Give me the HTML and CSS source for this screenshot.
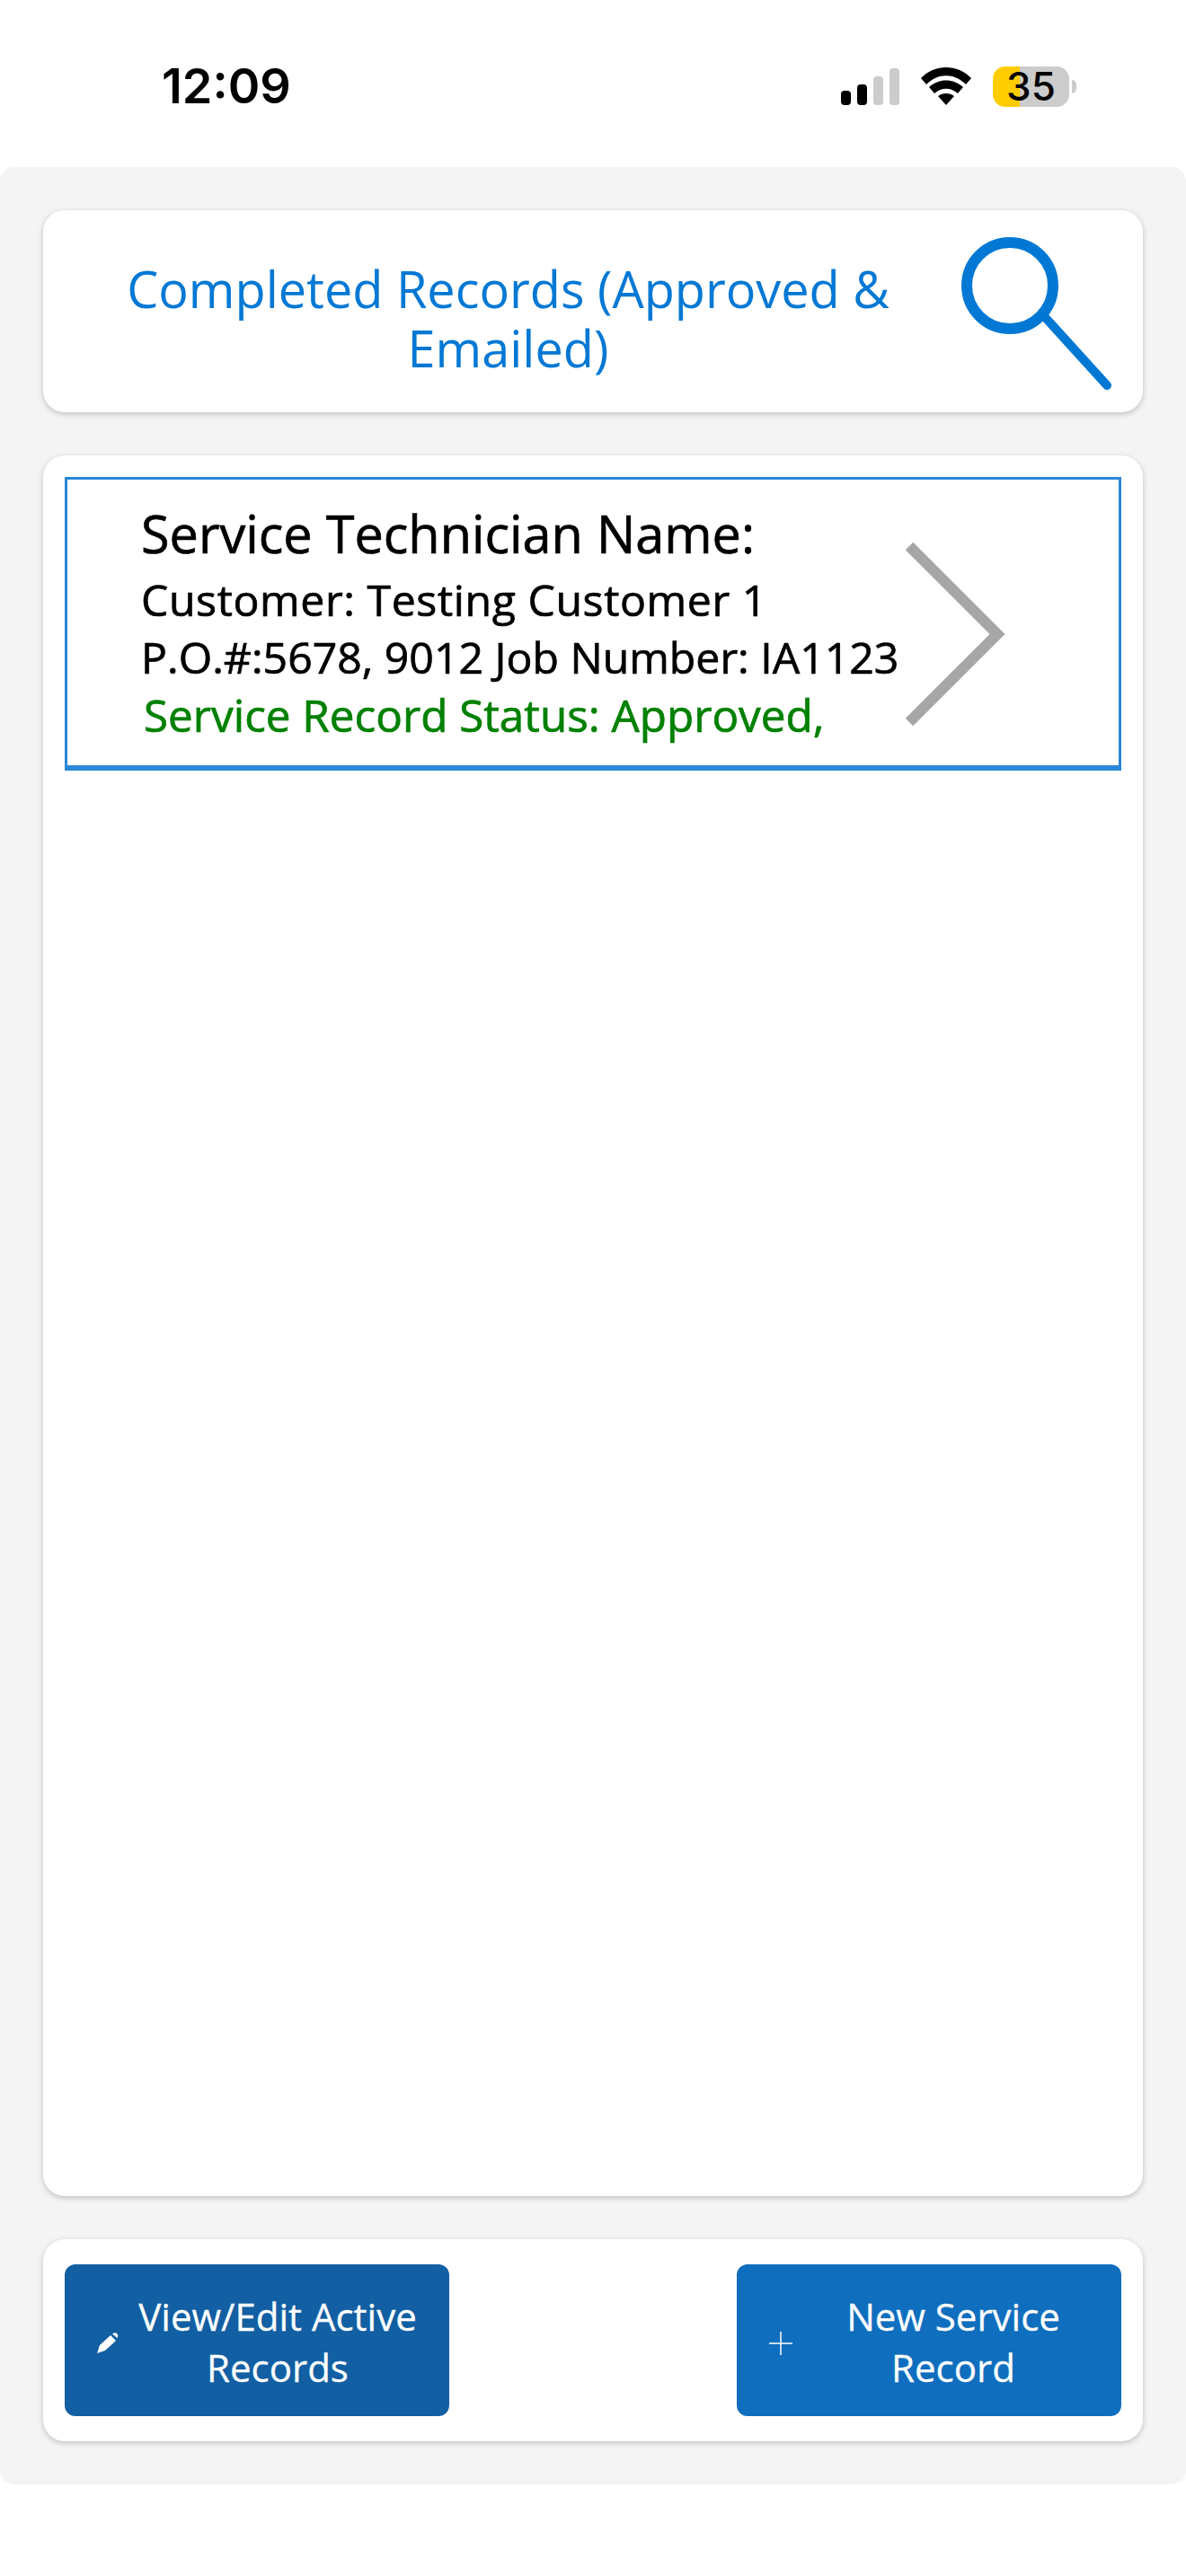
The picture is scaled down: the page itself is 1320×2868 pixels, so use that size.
FILE: index.html
```html
<!DOCTYPE html>
<html lang="en">
<head>
    <meta charset="UTF-8">
    <meta name="viewport" content="width=device-width, initial-scale=1.0">
    <title>Completed Records</title>
    <link rel="stylesheet" href="styles.css">
</head>
<body>
    <div class="status-bar">
        <span class="time">12:09</span>
        <div class="status-icons">
            <div class="signal">
                <span class="bar bar-1"></span>
                <span class="bar bar-2"></span>
                <span class="bar bar-3 off"></span>
                <span class="bar bar-4 off"></span>
            </div>
            <svg class="wifi" width="58" height="43" viewBox="0 0 58 43">
                <path d="M1 13 C16 -3 42 -3 57 13 L51 20 C38 7 20 7 7 20 Z" fill="#000"/>
                <path d="M10 23 C21 13 37 13 48 23 L42 30 C34 23 24 23 16 30 Z" fill="#000"/>
                <path d="M20 33 C25 29 33 29 38 33 L29 43 Z" fill="#000"/>
            </svg>
            <div class="battery">
                <div class="battery-body">35</div>
                <span class="battery-nub"></span>
            </div>
        </div>
    </div>

    <div class="main">
        <div class="card header-card">
            <div class="page-title">Completed Records (Approved &amp; Emailed)</div>
            <svg class="search-icon" width="104" height="172" viewBox="0 0 104 172">
                <circle cx="53" cy="54" r="48" fill="none" stroke="#0078d4" stroke-width="12"/>
                <line x1="92" y1="89" x2="161" y2="165" stroke="#0078d4" stroke-width="10" stroke-linecap="round"/>
            </svg>
        </div>

        <div class="card list-card">
            <div class="record">
                <div class="record-text">
                    <div class="record-name">Service Technician Name:</div>
                    <div class="record-line record-customer">Customer: Testing Customer 1</div>
                    <div class="record-line">P.O.#:5678, 9012 Job Number: IA1123</div>
                    <div class="record-status">Service Record Status: Approved,</div>
                </div>
                <svg class="chevron" width="112" height="204" viewBox="0 0 112 204">
                    <path d="M5 4 L103 102 L5 200" fill="none" stroke="#a6a6a6" stroke-width="12"/>
                </svg>
            </div>
        </div>

        <div class="card footer-card">
            <button class="action action-dark">
                <svg class="action-icon" width="26" height="24" viewBox="0 0 26 24">
                    <path d="M0 23 L3 14 L15 3 L21 9 L9 20 Z" fill="#fff"/>
                    <path d="M17 1.5 C19 0 21 0 22 1 C23.5 2.500 23.500 4.500 22.500 6 Z" fill="#fff"/>
                </svg>
                <span class="action-label">View/Edit Active Records</span>
            </button>
            <button class="action action-light">
                <svg class="action-icon" width="26" height="26" viewBox="0 0 26 26">
                    <path d="M13 0 V26 M0 13 H26" stroke="#fff" stroke-width="1.500" fill="none"/>
                </svg>
                <span class="action-label">New Service Record</span>
            </button>
        </div>
    </div>
</body>
</html>
```

FILE: styles.css
```css
* {
    box-sizing: border-box;
}
body {
    margin: 0;
    height: 2868px;
    background: #fff;
    font-family: "Open Sans", sans-serif;
    display: flex;
    flex-direction: column;
}
.status-bar {
    height: 186px;
    flex-shrink: 0;
    padding: 0 122px 0 180px;
    display: flex;
    justify-content: space-between;
    align-items: flex-start;
}
.time {
    font-family: Inter, sans-serif;
    font-weight: 600;
    font-size: 54px;
    line-height: 60px;
    margin-top: 66px;
    color: #000;
}
.status-icons {
    display: flex;
    align-items: flex-end;
    margin-top: 74px;
}
.signal {
    display: flex;
    align-items: flex-end;
    gap: 7px;
    height: 43px;
}
.bar {
    width: 11px;
    background: #000;
    border-radius: 4px;
}
.bar.off {
    background: #ccc;
}
.bar-1 { height: 16px; }
.bar-2 { height: 23px; }
.bar-3 { height: 32px; }
.bar-4 { height: 41px; }
.wifi {
    margin-left: 23px;
}
.battery {
    display: flex;
    align-items: center;
    margin-left: 23px;
    margin-bottom: -2px;
}
.battery-body {
    width: 85px;
    height: 45px;
    border-radius: 14px;
    background: linear-gradient(to right, #ffcc00 35%, #ccc 35%);
    font-family: Inter, sans-serif;
    font-weight: 500;
    font-size: 44px;
    line-height: 45px;
    text-align: center;
    color: #000;
}
.battery-nub {
    width: 5px;
    height: 15px;
    margin-left: 3px;
    background: #ccc;
    border-radius: 0 5px 5px 0;
}
.main {
    height: 2580px;
    flex-shrink: 0;
    background: #f4f4f4;
    border-radius: 16px;
    padding: 48px;
    display: flex;
    flex-direction: column;
    gap: 48px;
}
.card {
    background: #fff;
    border-radius: 24px;
    box-shadow: 0 2px 6px rgba(0,0,0,0.22);
}
.header-card {
    height: 225px;
    flex-shrink: 0;
    display: flex;
    padding-top: 30px;
    overflow: hidden;
}
.page-title {
    flex: 1;
    padding: 24px 33px 0 45px;
    font-size: 55.8px;
    line-height: 66px;
    text-align: center;
    color: #0078d4;
}
.search-icon {
    flex-shrink: 0;
    margin-right: 97px;
    overflow: visible;
}
.list-card {
    flex: 1;
    padding: 24px;
}
.record {
    height: 327px;
    border: solid #2b88d8;
    border-width: 3px 3px 6px 3px;
    display: flex;
    align-items: flex-start;
}
.record-text {
    width: 932px;
    padding: 24px 0 0 82px;
    white-space: nowrap;
    -webkit-text-stroke: 0.7px currentColor;
}
.record-name {
    font-size: 57.6px;
    line-height: 72px;
    margin-bottom: 5px;
    color: #000;
}
.record-line {
    font-size: 48.2px;
    line-height: 64px;
    color: #000;
}
.record-customer {
    letter-spacing: 0.6px;
}
.record-status {
    font-size: 49.4px;
    line-height: 65px;
    color: #008000;
    padding-left: 3px;
}
.chevron {
    margin-top: 70px;
    flex-shrink: 0;
}
.footer-card {
    height: 225px;
    flex-shrink: 0;
    padding: 28px 24px;
    display: flex;
    justify-content: space-between;
}
.action {
    width: 428px;
    height: 169px;
    border: none;
    border-radius: 12px;
    color: #fff;
    font-family: inherit;
    font-size: 42px;
    line-height: 57px;
    padding: 2px 0 0 36px;
    display: flex;
    align-items: center;
    cursor: pointer;
}
.action-dark {
    background: #125fa3;
}
.action-light {
    background: #106ebe;
}
.action-icon {
    flex-shrink: 0;
    margin-top: 4px;
}
.action-label {
    width: 344px;
    text-align: center;
    -webkit-text-stroke: 0.3px currentColor;
}
.action-dark .action-label {
    margin-left: 3px;
}
.action-light .action-label {
    margin-left: 7px;
}
```
